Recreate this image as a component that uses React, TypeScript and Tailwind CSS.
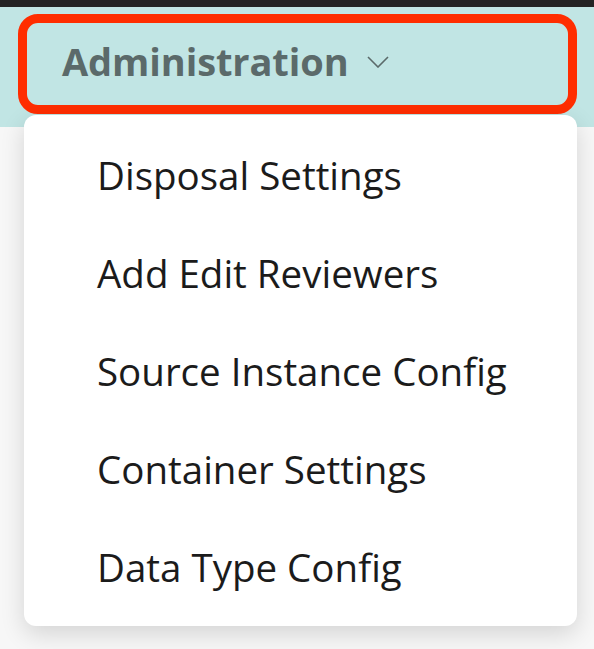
import React from "react";

const items = [
	"Disposal Settings",
	"Add Edit Reviewers",
	"Source Instance Config",
	"Container Settings",
	"Data Type Config",
];

const App = () => {
	return (
		<div
			className="relative w-[594px] h-[649px] overflow-hidden bg-[#f7f7f7]"
			style={{ fontFamily: '"Open Sans", "Noto Sans", sans-serif' }}
		>
			{/* top bar */}
			<div className="h-[7px] bg-[#232323]" />
			{/* header band */}
			<div className="h-[120px] bg-[#c1e5e4] pt-[7px] pl-[18px]">
				<div className="w-[559px] h-[100px] rounded-[20px] border-[9px] border-[#ff2d00] flex items-center pl-[35px] pb-[6px]">
					<span className="text-[38px] font-bold text-[#5b6a6a] tracking-[-0.1px]">
						Administration
					</span>
					<svg
						className="ml-[18px] mt-[2px]"
						width="22"
						height="12"
						viewBox="0 0 22 12"
						fill="none"
					>
						<path
							d="M1 1l10 10 10-10"
							stroke="#5b6a6a"
							strokeWidth="1.6"
						/>
					</svg>
				</div>
			</div>

			{/* dropdown menu */}
			<div className="absolute left-[24px] top-[115px] w-[553px] bg-white rounded-[12px] shadow-[0_8px_24px_rgba(0,0,0,0.14)] pt-[12px] pb-[9px]">
				{items.map((item) => (
					<div
						key={item}
						className="h-[98px] flex items-center pl-[73px] text-[38.5px] text-[#1b1b1b]"
					>
						{item}
					</div>
				))}
			</div>
		</div>
	);
};

export default App;
